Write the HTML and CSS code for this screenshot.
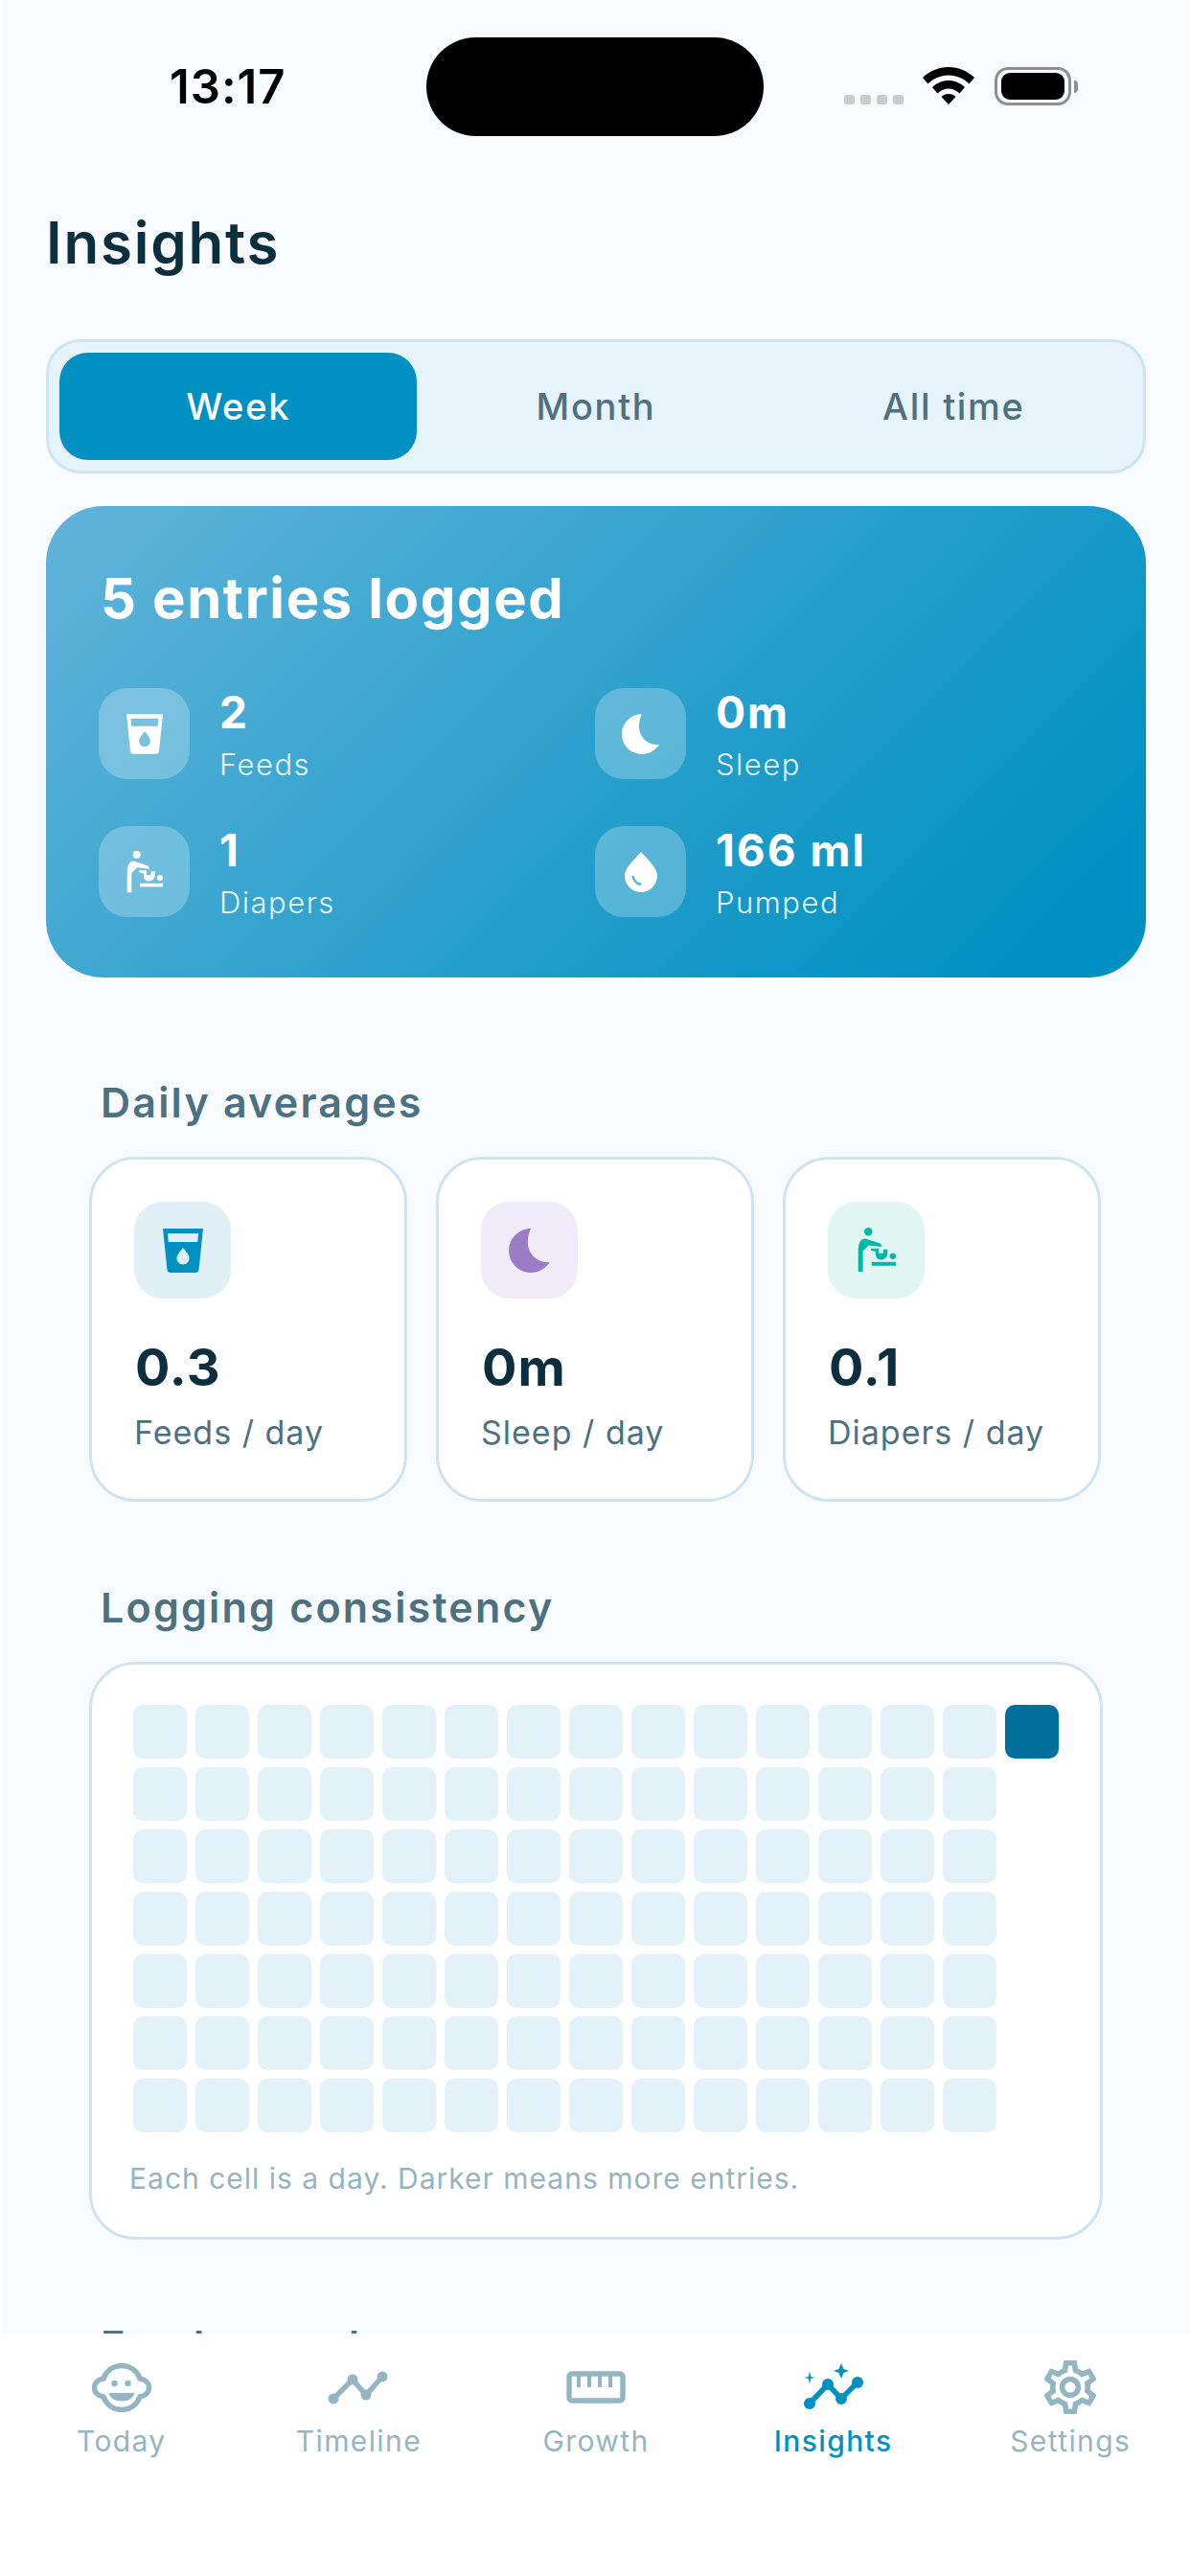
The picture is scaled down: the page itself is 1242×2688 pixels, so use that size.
FILE: index.html
```html
<!DOCTYPE html>
<html lang="en">
<head>
    <meta charset="UTF-8">
    <meta name="viewport" content="width=device-width, initial-scale=1.0">
    <title>Insights</title>
    <link rel="stylesheet" href="styles.css">
</head>
<body>
    <!-- Status bar -->
    <div class="status-bar">
        <div class="time">13:17</div>
        <div class="island"></div>
        <div class="status-icons">
            <div class="signal"><span></span><span></span><span></span><span></span></div>
            <svg class="wifi" viewBox="0 0 54 39"><path d="M27 0C16.500 0 7 4.200 0 11L5.500 17.500C11 12 18.600 8.500 27 8.500S43 12 48.500 17.500L54 11C47 4.200 37.500 0 27 0ZM27 14C20.500 14 14.500 16.700 10 21L15.500 27.500C18.500 24.500 22.500 22.500 27 22.500S35.500 24.500 38.500 27.500L44 21C39.500 16.700 33.500 14 27 14ZM27 28C24 28 21.600 29.100 19.500 31L27 39L34.500 31C32.400 29.100 30 28 27 28Z"/></svg>
            <div class="battery"><div class="battery-fill"></div></div>
            <div class="battery-nub"></div>
        </div>
    </div>

    <main class="content">
        <h1 class="page-title">Insights</h1>

        <!-- Range tabs -->
        <div class="segment">
            <div class="segment-item active">Week</div>
            <div class="segment-item">Month</div>
            <div class="segment-item">All time</div>
        </div>

        <!-- Summary -->
        <section class="summary">
            <h2>5 entries logged</h2>
            <div class="summary-grid">
                <div class="summary-item">
                    <div class="summary-icon">
                        <svg class="ic-cup" viewBox="0 0 42 46"><path fill-rule="evenodd" d="M0 0H42L37.500 43C37.300 45 36 46 34 46H8C6 46 4.700 45 4.500 43ZM5 5L5.800 14H36.200L37 5ZM21 20C18 24 14.500 27 14.500 31C14.500 34.600 17.400 37.500 21 37.500S27.500 34.600 27.500 31C27.500 27 24 24 21 20Z"/></svg>
                    </div>
                    <div>
                        <div class="summary-value">2</div>
                        <div class="summary-label">Feeds</div>
                    </div>
                </div>
                <div class="summary-item">
                    <div class="summary-icon">
                        <svg class="ic-moon" viewBox="0 0 39 42"><path d="M21 0C9.400 0 0 9.400 0 21S9.400 42 21 42C28.500 42 35 38 39 32C28 33 18 25 18 13C18 8 19 4 21 0Z"/></svg>
                    </div>
                    <div>
                        <div class="summary-value">0m</div>
                        <div class="summary-label">Sleep</div>
                    </div>
                </div>
                <div class="summary-item">
                    <div class="summary-icon">
                        <svg class="ic-baby" viewBox="0 0 38 44"><circle cx="10.700" cy="3.700" r="4"/><path d="M4.700 11.300C6.500 10.200 8.500 10.500 10 11.300L23 15.700L24 18.700L11 17.300L5.300 23V43.300H.7V24C.7 17 2 13 4.700 11.300Z"/><path d="M13 20.300H21V25H25.500V21.300H29.700V25C29.700 29 26.500 31.500 23 31.500C20 31.500 18 29 18 26V23.500L13.500 22.500Z"/><circle cx="35" cy="28" r="3"/><rect x="14" y="33.700" width="24" height="3.700"/></svg>
                    </div>
                    <div>
                        <div class="summary-value">1</div>
                        <div class="summary-label">Diapers</div>
                    </div>
                </div>
                <div class="summary-item">
                    <div class="summary-icon">
                        <svg class="ic-drop" viewBox="0 0 34 42"><path fill-rule="evenodd" d="M17 0C8 10 0 17 0 25A17 17 0 0 0 34 25C34 17 26 10 17 0ZM7.500 25C8 30 11.500 34.500 17 35V32.500C13 32 10.500 29 10 25Z"/></svg>
                    </div>
                    <div>
                        <div class="summary-value">166 ml</div>
                        <div class="summary-label">Pumped</div>
                    </div>
                </div>
            </div>
        </section>

        <!-- Daily averages -->
        <section class="block block-averages">
            <h3 class="block-title">Daily averages</h3>
            <div class="avg-row">
                <div class="avg-card">
                    <div class="avg-icon tint-blue">
                        <svg class="ic-cup-lg" viewBox="0 0 42 46"><path fill-rule="evenodd" d="M0 0H42L37.500 43C37.300 45 36 46 34 46H8C6 46 4.700 45 4.500 43ZM5 5L5.800 14H36.200L37 5ZM21 20C18 24 14.500 27 14.500 31C14.500 34.600 17.400 37.500 21 37.500S27.500 34.600 27.500 31C27.500 27 24 24 21 20Z"/></svg>
                    </div>
                    <div class="avg-value">0.3</div>
                    <div class="avg-label">Feeds / day</div>
                </div>
                <div class="avg-card">
                    <div class="avg-icon tint-purple">
                        <svg class="ic-moon-lg" viewBox="0 0 39 42"><path d="M21 0C9.400 0 0 9.400 0 21S9.400 42 21 42C28.500 42 35 38 39 32C28 33 18 25 18 13C18 8 19 4 21 0Z"/></svg>
                    </div>
                    <div class="avg-value">0m</div>
                    <div class="avg-label">Sleep / day</div>
                </div>
                <div class="avg-card">
                    <div class="avg-icon tint-green">
                        <svg class="ic-baby-lg" viewBox="0 0 38 44"><circle cx="10.700" cy="3.700" r="4"/><path d="M4.700 11.300C6.500 10.200 8.500 10.500 10 11.300L23 15.700L24 18.700L11 17.300L5.300 23V43.300H.7V24C.7 17 2 13 4.700 11.300Z"/><path d="M13 20.300H21V25H25.500V21.300H29.700V25C29.700 29 26.500 31.500 23 31.500C20 31.500 18 29 18 26V23.500L13.500 22.500Z"/><circle cx="35" cy="28" r="3"/><rect x="14" y="33.700" width="24" height="3.700"/></svg>
                    </div>
                    <div class="avg-value">0.1</div>
                    <div class="avg-label">Diapers / day</div>
                </div>
            </div>
        </section>

        <!-- Logging consistency -->
        <section class="block block-consistency">
            <h3 class="block-title">Logging consistency</h3>
            <div class="heat-card">
                <div class="heat-row"><div></div><div></div><div></div><div></div><div></div><div></div><div></div><div></div><div></div><div></div><div></div><div></div><div></div><div></div><div class="on"></div></div>
                <div class="heat-row"><div></div><div></div><div></div><div></div><div></div><div></div><div></div><div></div><div></div><div></div><div></div><div></div><div></div><div></div></div>
                <div class="heat-row"><div></div><div></div><div></div><div></div><div></div><div></div><div></div><div></div><div></div><div></div><div></div><div></div><div></div><div></div></div>
                <div class="heat-row"><div></div><div></div><div></div><div></div><div></div><div></div><div></div><div></div><div></div><div></div><div></div><div></div><div></div><div></div></div>
                <div class="heat-row"><div></div><div></div><div></div><div></div><div></div><div></div><div></div><div></div><div></div><div></div><div></div><div></div><div></div><div></div></div>
                <div class="heat-row"><div></div><div></div><div></div><div></div><div></div><div></div><div></div><div></div><div></div><div></div><div></div><div></div><div></div><div></div></div>
                <div class="heat-row"><div></div><div></div><div></div><div></div><div></div><div></div><div></div><div></div><div></div><div></div><div></div><div></div><div></div><div></div></div>
                <p class="heat-note">Each cell is a day. Darker means more entries.</p>
            </div>
        </section>

        <!-- Cut off by the tab bar -->
        <section class="block block-next">
            <h3 class="block-title">Feed record</h3>
        </section>
    </main>

    <!-- Tab bar -->
    <nav class="tabbar">
        <div class="tab">
            <svg class="tab-icon ic-face" viewBox="0 0 62 51">
                <path class="line" d="M31 2.500C40 2.500 47 8 50 16C56 17 59.500 21 59.500 25.500C59.500 30 56 34 50 35C47 43 40 48.500 31 48.500C22 48.500 15 43 12 35C6 34 2.500 30 2.500 25.500C2.500 21 6 17 12 16C15 8 22 2.500 31 2.500Z"/>
                <circle cx="23.500" cy="21" r="3.200"/><circle cx="37.500" cy="21" r="3.200"/>
                <path d="M18 31H44C44 36 38 39.500 31 39.500C24 39.500 18 36 18 31Z"/>
            </svg>
            <span>Today</span>
        </div>
        <div class="tab">
            <svg class="tab-icon ic-line" viewBox="0 0 64 36">
                <path class="line" d="M6 30L26 10L40 26L57 7"/>
                <circle cx="6" cy="30" r="5.500"/><circle cx="26" cy="10" r="5.500"/><circle cx="40" cy="26" r="5.500"/><circle cx="57" cy="7" r="5.500"/>
            </svg>
            <span>Timeline</span>
        </div>
        <div class="tab">
            <svg class="tab-icon ic-ruler" viewBox="0 0 62 34">
                <rect class="line" x="3" y="3" width="56" height="28" rx="3"/>
                <path class="line thin" d="M13 4V17M24 4V17M35 4V17M46 4V17"/>
            </svg>
            <span>Growth</span>
        </div>
        <div class="tab active">
            <svg class="tab-icon ic-spark" viewBox="0 0 64 50">
                <path class="line" d="M7 42L26 22L40 37L57 20"/>
                <circle cx="7" cy="42" r="6"/><circle cx="26" cy="22" r="6"/><circle cx="40" cy="37" r="6"/><circle cx="57" cy="20" r="6"/>
                <path d="M40 0L42.500 6L48 8L42.500 10L40 16L37.500 10L32 8L37.500 6Z"/>
                <path d="M7 8L8.200 14L13 15L8.200 16L7 22L5.800 16L1 15L5.800 14Z"/>
            </svg>
            <span>Insights</span>
        </div>
        <div class="tab">
            <svg class="tab-icon ic-gear" viewBox="2.500 2 19 20"><path d="M19.430 12.980c.04-.32.07-.64.07-.98 0-.34-.03-.66-.07-.98l2.110-1.650c.19-.15.24-.42.12-.64l-2-3.460c-.09-.16-.26-.25-.44-.25-.06 0-.12.01-.17.03l-2.490 1c-.52-.4-1.080-.73-1.690-.98l-.38-2.650C14.460 2.180 14.250 2 14 2h-4c-.25 0-.46.18-.49.42l-.38 2.650c-.61.25-1.170.59-1.690.98l-2.490-1c-.06-.02-.12-.03-.18-.03-.17 0-.34.09-.43.25l-2 3.460c-.13.22-.07.49.12.64l2.110 1.650c-.04.32-.07.65-.07.98 0 .33.03.66.07.98l-2.110 1.650c-.19.15-.24.42-.12.64l2 3.460c.09.16.26.25.44.25.06 0 .12-.01.17-.03l2.490-1c.52.4 1.080.73 1.690.98l.38 2.650c.03.24.24.42.49.42h4c.25 0 .46-.18.49-.42l.38-2.650c.61-.25 1.170-.59 1.690-.98l2.490 1c.06.02.12.03.18.03.17 0 .34-.09.43-.25l2-3.460c.12-.22.07-.49-.12-.64l-2.110-1.650zm-1.980-1.710c.04.31.05.52.05.73 0 .21-.02.43-.05.73l-.14 1.130.89.7 1.080.84-.7 1.210-1.270-.51-1.040-.42-.9.68c-.43.32-.84.56-1.250.73l-1.060.43-.16 1.130-.2 1.350h-1.400l-.19-1.350-.16-1.130-1.060-.43c-.43-.18-.83-.41-1.230-.71l-.91-.7-1.060.43-1.270.51-.7-1.210 1.080-.84.89-.7-.14-1.130c-.03-.31-.05-.54-.05-.74s.02-.43.05-.73l.14-1.130-.89-.7-1.080-.84.7-1.210 1.270.51 1.040.42.9-.68c.43-.32.84-.56 1.250-.73l1.060-.43.16-1.130.2-1.350h1.390l.19 1.350.16 1.130 1.060.43c.43.18.83.41 1.230.71l.91.7 1.060-.43 1.270-.51.7 1.210-1.070.85-.89.7.14 1.130zM12 8c-2.210 0-4 1.790-4 4s1.790 4 4 4 4-1.790 4-4-1.790-4-4-4zm0 6c-1.100 0-2-.9-2-2s.9-2 2-2 2 .9 2 2-.9 2-2 2z"/></svg>
            <span>Settings</span>
        </div>
    </nav>
</body>
</html>
```

FILE: styles.css
```css
* {
    margin: 0;
    padding: 0;
    box-sizing: border-box;
    font-family: 'Inter', 'Liberation Sans', sans-serif;
}

html, body {
    width: 1242px;
    height: 2688px;
    overflow: hidden;
}

body {
    position: relative;
    background-color: #f7fbfe;
    border-left: 2px solid #fff;
    color: #0b2f3f;
}

/* Status bar */
.status-bar {
    display: grid;
    grid-template-columns: 443px 352px 1fr;
    height: 142px;
    padding-top: 39px;
}

.time {
    padding-left: 175px;
    padding-top: 27px;
    font-size: 49px;
    line-height: 50px;
    font-weight: 600;
    letter-spacing: 1px;
    color: #000;
}

.island {
    height: 103px;
    background: #000;
    border-radius: 52px;
}

.status-icons {
    display: flex;
    align-items: flex-start;
    padding-left: 84px;
    padding-top: 31px;
}

.signal {
    display: flex;
    gap: 6.500px;
    width: 82px;
    padding-top: 29px;
}

.signal span {
    width: 10.500px;
    height: 10px;
    border-radius: 3px;
    background: #c8cccc;
}

.wifi {
    width: 54px;
    height: 39px;
    margin-right: 21px;
}

.battery {
    width: 80px;
    height: 40px;
    border: 3px solid #8e9090;
    border-radius: 14px;
    padding: 3px 4px;
}

.battery-fill {
    height: 100%;
    background: #000;
    border-radius: 9px;
}

.battery-nub {
    width: 4px;
    height: 13px;
    margin: 14px 0 0 3px;
    background: #8e9090;
    border-radius: 0 4px 4px 0;
}

/* Page */
.content {
    padding: 0 46px 0 46px;
}

.page-title {
    margin-top: 75px;
    height: 72px;
    font-size: 60px;
    line-height: 72px;
    font-weight: 600;
    letter-spacing: 1.800px;
}

/* Range tabs */
.segment {
    display: flex;
    gap: 0;
    height: 140px;
    margin-top: 65px;
    padding: 11px;
    background: #e6f3fa;
    border: 3px solid #cfe4ef;
    border-radius: 36px;
}

.segment-item {
    flex: 1;
    display: flex;
    align-items: center;
    justify-content: center;
    font-size: 38px;
    font-weight: 500;
    letter-spacing: 1.700px;
    color: #4d7180;
    border-radius: 30px;
}

.segment-item.active {
    background: #0091c2;
    color: #fff;
}

/* Summary */
.summary {
    height: 492px;
    margin-top: 34px;
    padding: 64px 59px 0 55px;
    border-radius: 60px;
    background: linear-gradient(135deg, #62b4da, #0091c2 90%);
    color: #fff;
}

.summary h2 {
    padding-left: 2px;
    font-size: 58px;
    line-height: 64px;
    font-weight: 700;
    letter-spacing: 1.600px;
}

.summary-grid {
    display: grid;
    grid-template-columns: 518px 1fr;
    row-gap: 45px;
    margin-top: 62px;
}

.summary-item {
    display: flex;
    gap: 31px;
}

.summary-icon {
    display: flex;
    align-items: center;
    justify-content: center;
    width: 95px;
    height: 95px;
    border-radius: 30px;
    background: rgba(255, 255, 255, 0.25);
}

.summary-icon svg {
    fill: #fff;
}

.ic-cup { width: 38px; height: 42px; }
.ic-moon { width: 39px; height: 42px; }
.ic-baby { width: 38px; height: 44px; }
.ic-drop { width: 34px; height: 42px; }

.summary-value {
    margin-top: -1px;
    font-size: 46px;
    line-height: 52px;
    font-weight: 700;
    letter-spacing: 2px;
}

.summary-label {
    margin-top: 10px;
    font-size: 31px;
    line-height: 38px;
    font-weight: 300;
    letter-spacing: 1.500px;
    color: rgba(255, 255, 255, 0.9);
}

/* Sections */
.block {
    padding: 0 45px;
}

.block-title {
    padding-left: 12px;
    font-size: 43px;
    line-height: 50px;
    font-weight: 600;
    letter-spacing: 2.200px;
    color: #4d7180;
}

.block-averages {
    margin-top: 105px;
}

.block-consistency {
    margin-top: 85px;
}

.block-next {
    margin-top: 85px;
}

/* Daily averages */
.avg-row {
    display: flex;
    gap: 30px;
    margin-top: 32px;
}

.avg-card {
    width: 332px;
    height: 360px;
    padding: 44px 0 0 44px;
    background: #fff;
    border: 3px solid #cfe4ef;
    border-radius: 48px;
}

.avg-icon {
    display: flex;
    align-items: center;
    justify-content: center;
    width: 101px;
    height: 101px;
    border-radius: 30px;
}

.tint-blue { background: #e1eff7; fill: #0091c2; }
.tint-purple { background: #f0ebf8; fill: #9b7cc4; }
.tint-green { background: #e1f5f2; fill: #00b8a6; }

.ic-cup-lg { width: 42px; height: 46px; }
.ic-moon-lg { width: 43px; height: 46px; }
.ic-baby-lg { width: 40px; height: 49px; }

.avg-value {
    margin-top: 40px;
    margin-left: 1px;
    font-size: 54px;
    line-height: 64px;
    font-weight: 700;
    letter-spacing: 1px;
}

.avg-label {
    margin-top: 14px;
    font-size: 34px;
    line-height: 44px;
    font-weight: 400;
    letter-spacing: 1px;
    color: #4d7180;
}

/* Consistency grid */
.heat-card {
    height: 603px;
    margin-top: 32px;
    padding: 42px 0 0 43px;
    background: #fff;
    border: 3px solid #cfe4ef;
    border-radius: 48px;
}

.heat-row {
    display: flex;
    gap: 9px;
    margin-bottom: 9px;
}

.heat-row div {
    width: 56px;
    height: 56px;
    border-radius: 10px;
    background: #e3f1f8;
}

.heat-row div.on {
    background: #006f9c;
}

.heat-note {
    margin-top: 28px;
    margin-left: -4px;
    font-size: 30px;
    line-height: 40px;
    letter-spacing: 1px;
    color: #96b3bf;
}

/* Tab bar */
.tabbar {
    position: absolute;
    left: -2px;
    right: 0;
    bottom: 0;
    height: 253px;
    padding: 0 1px 0 3px;
    display: grid;
    grid-template-columns: repeat(5, 1fr);
    background: #fff;
}

.tab {
    display: flex;
    flex-direction: column;
    align-items: center;
    gap: 0;
    font-size: 30px;
    letter-spacing: 1.400px;
    color: #94b5c2;
    fill: #94b5c2;
}

.tab span {
    line-height: 36px;
}

.tab.active {
    color: #0091c2;
    fill: #0091c2;
}

.tab.active span {
    font-weight: 500;
}

.tab-icon .line {
    fill: none;
    stroke: #94b5c2;
    stroke-width: 5.500;
}

.tab-icon .thin {
    stroke-width: 4;
}

.tab.active .line {
    stroke: #0091c2;
}

.ic-face { width: 62px; height: 51px; margin: 31px 0 12px; }
.ic-line { width: 64px; height: 36px; margin: 38px 0 20px; }
.ic-ruler { width: 62px; height: 34px; margin: 39px 0 21px; }
.ic-spark { width: 64px; height: 50px; margin: 31px 0 13px; }
.ic-gear { width: 54px; height: 56px; margin: 28px 0 10px; }
```
